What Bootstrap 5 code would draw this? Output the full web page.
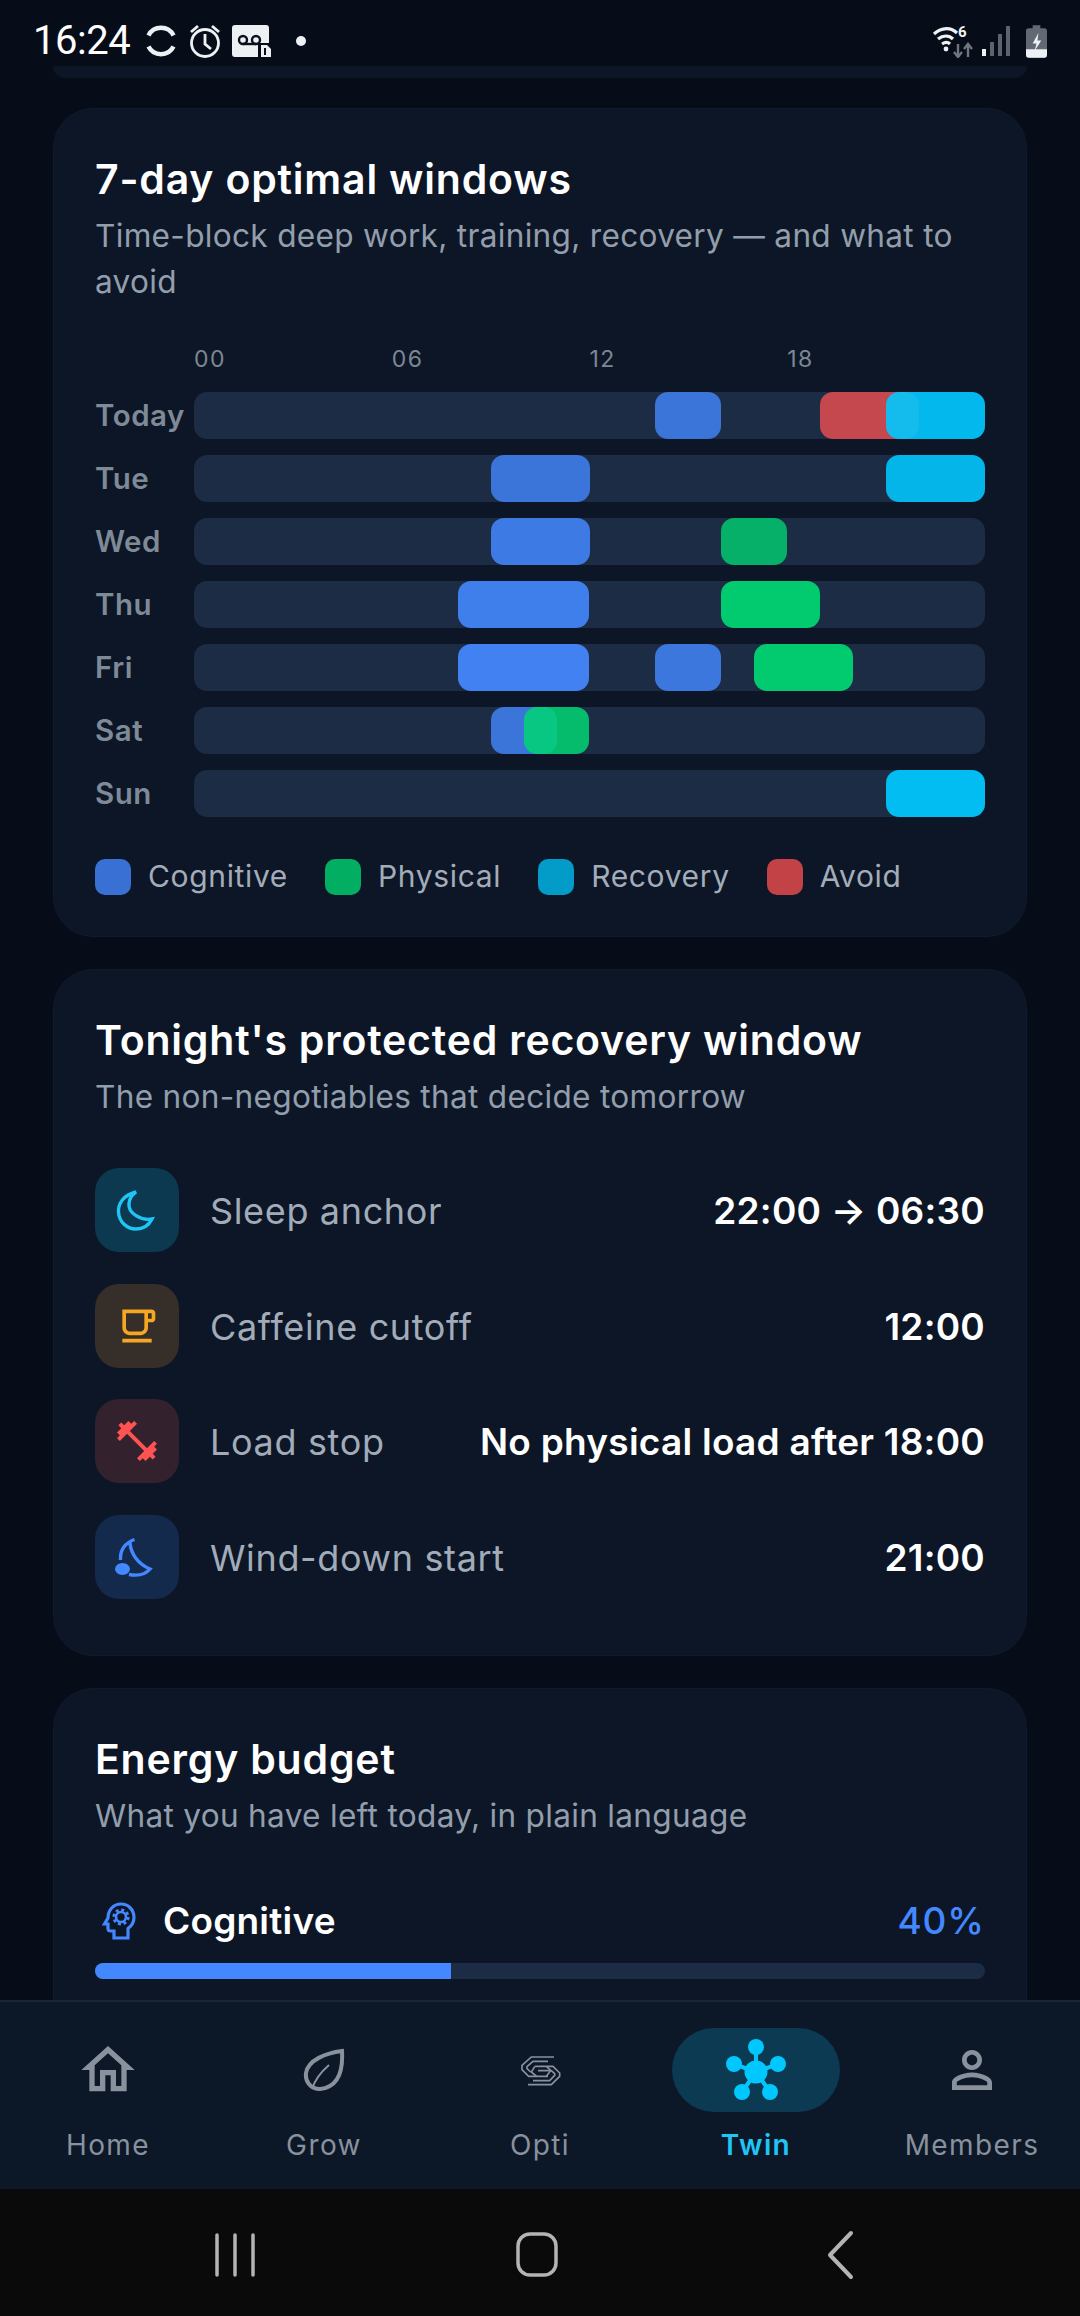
<!DOCTYPE html>
<html lang="en">
<head>
    <meta charset="UTF-8">
    <meta name="viewport" content="width=device-width, initial-scale=1.0">
    <title>Twin</title>
    <link href="https://cdn.jsdelivr.net/npm/bootstrap@5.3.0/dist/css/bootstrap.min.css" rel="stylesheet">
    <style>
        html, body { height: 100%; }
        body {
            background-color: #060d18;
            font-family: "Inter", "Liberation Sans", sans-serif;
            color: #fff;
            overflow: hidden;
        }
        .app-shell { height: 2316px; }
        .status-strip { height: 66px; padding: 0 33px 0 33px; font-family: "Roboto", sans-serif; font-size: 40px; }
        .status-strip svg { display: block; }
        .status-time { letter-spacing: -.5px; margin-right: 14px; line-height: 1; }
        .status-gap { margin-right: 9px; }
        .status-dot { margin-left: 24px; }
        .scroll-area { min-height: 0; overflow: hidden; padding: 0 53px; }
        .card-tail { height: 12px; background: #0c1626; border-radius: 0 0 30px 30px; margin-bottom: 30px; }
        .twin-card {
            background: #0c1626;
            border: 1px solid #0f1b2e;
            border-radius: 40px;
            padding: 42px 41px 0;
            margin-bottom: 32px;
            color: #fff;
        }
        .card-heading { font-size: 41px; font-weight: 600; line-height: 56px; margin: 0 0 6px; letter-spacing: .8px; }
        .card-sub { font-size: 31.6px; line-height: 46px; color: #939eac; margin: 0; letter-spacing: .3px; }
        .week-card { height: 829px; }
        .hour-axis { margin: 37px 0 0 99px; height: 34px; font-size: 23px; color: #7d8794; letter-spacing: 1.4px; line-height: 34px; }
        .hour-axis span { width: 197.75px; }
        .day-row { height: 47px; margin-top: 16px; }
        .hour-axis + .day-row { margin-top: 16px; }
        .day-name { width: 99px; font-size: 29.5px; font-weight: 600; color: #7f8a97; letter-spacing: .5px; white-space: nowrap; }
        .day-track { flex: 1; height: 47px; background: #1b2c44; border-radius: 13px; position: relative; }
        .day-block { position: absolute; top: 0; bottom: 0; border-radius: 13px; }
        .c-blue { background: #4488ff; }
        .c-green { background: #00d672; }
        .c-cyan { background: #00c8ff; }
        .c-red { background: #ff5252; }
        .legend-row { margin-top: 37px; font-size: 30px; color: #a3adba; letter-spacing: .65px; }
        .legend-dot { width: 36px; height: 36px; border-radius: 10px; margin-right: 17px; }
        .legend-row > div { margin-right: 37px; }
        .recovery-card { height: 687px; }
        .recovery-row { height: 84px; margin-bottom: 31.5px; }
        .recovery-list { margin-top: 48px; }
        .recovery-icon { width: 84px; height: 84px; border-radius: 24px; margin-right: 31px; flex-shrink: 0; }
        .recovery-name { font-size: 36px; color: #a2acb9; letter-spacing: .65px; white-space: nowrap; padding-top: 2px; }
        .recovery-value { font-size: 37px; font-weight: 600; white-space: nowrap; letter-spacing: .25px; padding-top: 2px; }
        .tone-cyan { background: #0c3850; color: #1fc5f5; }
        .tone-amber { background: #362e28; color: #f5a623; }
        .tone-red { background: #33222d; color: #ff5252; }
        .tone-blue { background: #132a4d; color: #4488ff; }
        .budget-card { height: 400px; }
        .budget-head { margin-top: 57px; height: 50px; }
        .budget-icon { margin-left: 5px; margin-right: 23px; }
        .budget-name { font-size: 37px; font-weight: 600; letter-spacing: .2px; }
        .budget-value { font-size: 37px; font-weight: 500; color: #4488ff; letter-spacing: .9px; }
        .budget-track { height: 16px; border-radius: 8px; background: #1b2c44; margin-top: 17px; }
        .budget-track .progress-bar { background: #4488ff; }
        .bottom-tabs { height: 189px; background: #0c1728; border-top: 2px solid #1a2638; flex-shrink: 0; }
        .tab-item { width: 216px; padding-top: 26px; }
        .tab-pill { width: 168px; height: 84px; border-radius: 42px; margin-bottom: 16px; color: #88919c; }
        .tab-pill.is-on { background: #0b3a52; color: #00c8ff; }
        .tab-text { font-size: 28px; color: #88919c; letter-spacing: 1.4px; line-height: 34px; }
        .tab-text.is-on { color: #1fc5f5; font-weight: 600; }
        .system-bar { height: 127px; background: #0a0a0a; flex-shrink: 0; }
    </style>
</head>
<body>
<div class="app-shell d-flex flex-column">
    <!-- status bar -->
    <div class="status-strip d-flex align-items-center justify-content-between flex-shrink-0 pt-3">
        <div class="d-flex align-items-center">
            <span class="status-time">16:24</span>
            <svg width="34" height="34" viewBox="0 0 34 34" fill="none" stroke="#eef1f4" stroke-width="4.5" class="status-gap"><path d="M4.500 11.500a14 14 0 0 1 25 0M4.500 22.500a14 14 0 0 0 25 0"/></svg>
            <svg width="36" height="36" viewBox="0 0 36 36" fill="none" stroke="#eef1f4" stroke-width="2.8" class="status-gap"><circle cx="18" cy="20" r="13.500"/><path d="M18 11v10l6 5M4 9l7-6M32 9l-7-6"/></svg>
            <svg width="40" height="32" viewBox="0 0 40 32"><path fill="#eef1f4" d="M3 0h31a3 3 0 0 1 3 3v15h-11v14H3a3 3 0 0 1-3-3V3a3 3 0 0 1 3-3z"/><path fill="#eef1f4" d="M29 20h6l4 4v8H29z"/><circle cx="11" cy="15" r="4" fill="none" stroke="#0a111c" stroke-width="2.400"/><circle cx="24" cy="15" r="4" fill="none" stroke="#0a111c" stroke-width="2.400"/><path d="M11 19h13" stroke="#0a111c" stroke-width="2.400"/><path d="M33 23v7" stroke="#0a111c" stroke-width="2"/></svg>
            <svg width="10" height="10" viewBox="0 0 10 10" class="status-dot"><circle cx="5" cy="5" r="5" fill="#eef1f4"/></svg>
        </div>
        <div class="d-flex align-items-center">
            <svg width="42" height="34" viewBox="0 0 42 34" fill="none" class="me-2"><path d="M2 10c8-7 17-7 23-1M6 15c5-4 11-4 15 0M10 20c3-2 6-2 8 0" stroke="#eef1f4" stroke-width="3.200"/><circle cx="14" cy="25" r="2.400" fill="#eef1f4"/><path d="M26 20v13M36 33V20" stroke="#6e7680" stroke-width="2.400"/><path d="M22 28l4 5 4-5M32 25l4-5 4 5" stroke="#6e7680" stroke-width="2.400"/><text x="26" y="13" fill="#eef1f4" font-size="15" font-weight="700" font-family="Roboto, sans-serif">6</text></svg>
            <svg width="28" height="32" viewBox="0 0 28 32" class="me-3"><rect x="0" y="24" width="4" height="7" fill="#eef1f4"/><rect x="8" y="17" width="4" height="14" fill="#5b636d"/><rect x="16" y="9" width="4" height="22" fill="#5b636d"/><rect x="24" y="1" width="4" height="30" fill="#5b636d"/></svg>
            <svg width="21" height="33" viewBox="0 0 22 34"><path fill="#616a74" d="M7 0h8v3h4a3 3 0 0 1 3 3v25a3 3 0 0 1-3 3H3a3 3 0 0 1-3-3V6a3 3 0 0 1 3-3h4z"/><path fill="#eef1f4" d="M0 25h22v6a3 3 0 0 1-3 3H3a3 3 0 0 1-3-3z"/><path fill="#eef1f4" d="M13 8l-6 11h4l-2 8 7-11h-4z"/></svg>
        </div>
    </div>

    <div class="scroll-area flex-grow-1">
        <div class="card-tail"></div>

        <!-- optimal windows -->
        <div class="card twin-card week-card">
            <h2 class="card-heading">7-day optimal windows</h2>
            <p class="card-sub">Time-block deep work, training, recovery — and what to avoid</p>
            <div class="hour-axis d-flex"><span>00</span><span>06</span><span>12</span><span>18</span></div>
            <div id="weekRows"></div>
            <div class="legend-row d-flex align-items-center">
                <div class="d-flex align-items-center"><span class="legend-dot c-blue" style="opacity:.8"></span>Cognitive</div>
                <div class="d-flex align-items-center"><span class="legend-dot c-green" style="opacity:.8"></span>Physical</div>
                <div class="d-flex align-items-center"><span class="legend-dot c-cyan" style="opacity:.75"></span>Recovery</div>
                <div class="d-flex align-items-center"><span class="legend-dot c-red" style="opacity:.75"></span>Avoid</div>
            </div>
        </div>

        <!-- recovery window -->
        <div class="card twin-card recovery-card">
            <h2 class="card-heading">Tonight's protected recovery window</h2>
            <p class="card-sub">The non-negotiables that decide tomorrow</p>
            <div class="recovery-list">
                <div class="recovery-row d-flex align-items-center">
                    <div class="recovery-icon tone-cyan d-flex align-items-center justify-content-center">
                        <svg width="44" height="44" viewBox="0 0 44 44" fill="none" stroke="currentColor" stroke-width="3.4"><path d="M21 4C9 7 3 15 3.500 24 4 34 12 41 21 41 28 41 34 37 37 31 26 33 13 25 14 16 14 11 17 7 21 4z"/></svg>
                    </div>
                    <span class="recovery-name">Sleep anchor</span>
                    <span class="recovery-value ms-auto">22:00 → 06:30</span>
                </div>
                <div class="recovery-row d-flex align-items-center">
                    <div class="recovery-icon tone-amber d-flex align-items-center justify-content-center">
                        <svg width="44" height="44" viewBox="0 0 24 24" fill="currentColor"><path d="M20 3H4v10c0 2.210 1.790 4 4 4h6c2.210 0 4-1.790 4-4v-3h2c1.110 0 2-.89 2-2V5c0-1.110-.89-2-2-2zm-4 10c0 1.100-.9 2-2 2H8c-1.100 0-2-.9-2-2V5h10v8zm4-5h-2V5h2v3zM4 19h16v2H4z"/></svg>
                    </div>
                    <span class="recovery-name">Caffeine cutoff</span>
                    <span class="recovery-value ms-auto">12:00</span>
                </div>
                <div class="recovery-row d-flex align-items-center">
                    <div class="recovery-icon tone-red d-flex align-items-center justify-content-center">
                        <svg width="48" height="48" viewBox="0 0 24 24" fill="currentColor"><path d="M20.570 14.860L22 13.430 20.570 12 17 15.570 8.430 7 12 3.430 10.570 2 9.140 3.430 7.710 2 5.570 4.140 4.140 2.710 2.710 4.140l1.430 1.430L2 7.710l1.430 1.430L2 10.570 3.430 12 7 8.430 15.570 17 12 20.570 13.430 22l1.430-1.430L16.290 22l2.140-2.140 1.430 1.430 1.430-1.430-1.430-1.430L22 16.290z"/></svg>
                    </div>
                    <span class="recovery-name">Load stop</span>
                    <span class="recovery-value ms-auto">No physical load after 18:00</span>
                </div>
                <div class="recovery-row d-flex align-items-center">
                    <div class="recovery-icon tone-blue d-flex align-items-center justify-content-center">
                        <svg width="44" height="44" viewBox="10 9 44 44" fill="none" stroke="currentColor" stroke-width="3.4"><path d="M29.500 13.500C20 17 15 24 15.500 34M25 17C26 28 33 38 45 43 40 49 32 50 24 48.500"/><ellipse cx="17.500" cy="43" rx="7.500" ry="6" fill="currentColor" stroke="none"/></svg>
                    </div>
                    <span class="recovery-name">Wind-down start</span>
                    <span class="recovery-value ms-auto">21:00</span>
                </div>
            </div>
        </div>

        <!-- energy budget -->
        <div class="card twin-card budget-card">
            <h2 class="card-heading">Energy budget</h2>
            <p class="card-sub">What you have left today, in plain language</p>
            <div class="budget-head d-flex align-items-center">
                <svg width="40" height="40" viewBox="0 0 40 40" fill="none" stroke="#4488ff" stroke-width="3.2" class="budget-icon"><path d="M14 37V30H10.500a2.500 2.500 0 0 1-2.500-2.500V23H4.500L8 17C8 9 13.500 3 21 3c7 0 13 5.500 13 13.500 0 5-2.500 8.500-6 11V37z"/><circle cx="21" cy="16" r="5" stroke-width="2.600"/><circle cx="21" cy="16" r="7.200" stroke-width="2.800" stroke-dasharray="3 2.660"/></svg>
                <span class="budget-name">Cognitive</span>
                <span class="budget-value ms-auto">40%</span>
            </div>
            <div class="progress budget-track"><div class="progress-bar" style="width:40%"></div></div>
        </div>
    </div>

    <!-- bottom nav -->
    <nav class="bottom-tabs d-flex">
        <div class="tab-item d-flex flex-column align-items-center">
            <div class="tab-pill d-flex align-items-center justify-content-center">
                <svg width="64" height="64" viewBox="0 0 24 24" fill="currentColor"><path d="M12 5.690l5 4.500V18h-2v-6H9v6H7v-7.810l5-4.500M12 3L2 12h3v8h6v-6h2v6h6v-8h3L12 3z"/></svg>
            </div>
            <span class="tab-text">Home</span>
        </div>
        <div class="tab-item d-flex flex-column align-items-center">
            <div class="tab-pill d-flex align-items-center justify-content-center">
                <svg width="44" height="44" viewBox="0 0 44 44" fill="none" stroke="currentColor" stroke-width="4"><path d="M40 3C41 20 38 39 18 41 8 41 3 33 4 25 6 12 24 5 40 3z"/><path d="M27 17C19 24 13 31 10 41" stroke-width="2"/></svg>
            </div>
            <span class="tab-text">Grow</span>
        </div>
        <div class="tab-item d-flex flex-column align-items-center">
            <div class="tab-pill d-flex align-items-center justify-content-center">
                <svg width="45" height="35" viewBox="40 35 135 105" fill="none" stroke="currentColor" stroke-width="5"><path d="M148 47H80L52 72V85L72 105H130"/><path d="M130 60H85L67 76V82L78 92"/><path d="M70 130H140L165 105V95L145 75H90"/><path d="M85 118H135L150 102V97L140 88H100"/><path d="M90 76 80 92 96 105M126 75 138 88 125 105"/></svg>
            </div>
            <span class="tab-text">Opti</span>
        </div>
        <div class="tab-item d-flex flex-column align-items-center">
            <div class="tab-pill is-on d-flex align-items-center justify-content-center">
                <svg width="64" height="64" viewBox="0 0 64 64" fill="currentColor"><path d="M32 12V36M10 26 32 34M54 26 32 34M18 54 32 34M46 54 32 34" stroke="currentColor" stroke-width="4"/><circle cx="32" cy="34" r="11.500"/><circle cx="32" cy="9" r="8"/><circle cx="10" cy="26" r="8"/><circle cx="54" cy="26" r="8"/><circle cx="18" cy="54" r="8"/><circle cx="46" cy="54" r="8"/></svg>
            </div>
            <span class="tab-text is-on">Twin</span>
        </div>
        <div class="tab-item d-flex flex-column align-items-center">
            <div class="tab-pill d-flex align-items-center justify-content-center">
                <svg width="60" height="60" viewBox="0 0 24 24" fill="currentColor"><path d="M12 5.900c1.160 0 2.100.94 2.100 2.100s-.94 2.100-2.100 2.100S9.900 9.160 9.900 8s.94-2.100 2.100-2.100m0 9c2.970 0 6.100 1.460 6.100 2.100v1.100H5.900V17c0-.64 3.130-2.100 6.100-2.100M12 4C9.790 4 8 5.790 8 8s1.790 4 4 4 4-1.790 4-4-1.790-4-4-4zm0 9c-2.670 0-8 1.340-8 4v3h16v-3c0-2.660-5.330-4-8-4z"/></svg>
            </div>
            <span class="tab-text">Members</span>
        </div>
    </nav>

    <!-- android nav -->
    <div class="system-bar position-relative">
        <svg width="1080" height="127" viewBox="0 0 1080 127" fill="none" stroke="#b4b4b4" stroke-width="3.5" stroke-linecap="round" stroke-linejoin="round">
            <path d="M217 46V86M235 46V86M253 46V86"/>
            <rect x="518" y="45" width="38" height="41" rx="12"/>
            <path d="M851 44 830 66 851 88" stroke-width="4"/>
        </svg>
    </div>
</div>

<script>
    // blocks are [colour, start hour, end hour, opacity]
    const days = [
        ['Today', [['c-blue', 14, 16, .8], ['c-red', 19, 22, .75], ['c-cyan', 21, 24, .9]]],
        ['Tue', [['c-blue', 9, 12, .8], ['c-cyan', 21, 24, .88]]],
        ['Wed', [['c-blue', 9, 12, .85], ['c-green', 16, 18, .78]]],
        ['Thu', [['c-blue', 8, 12, .9], ['c-green', 16, 19, .93]]],
        ['Fri', [['c-blue', 8, 12, .93], ['c-blue', 14, 16, .82], ['c-green', 17, 20, .93]]],
        ['Sat', [['c-blue', 9, 11, .8], ['c-green', 10, 12, .85]]],
        ['Sun', [['c-cyan', 21, 24, .93]]]
    ];

    const weekRows = document.getElementById('weekRows');
    days.forEach(([name, blocks]) => {
        const row = document.createElement('div');
        row.className = 'day-row d-flex align-items-center';
        const bars = blocks.map(([colour, from, to, alpha]) =>
            `<div class="day-block ${colour}" style="left:${from / 24 * 100}%;width:${(to - from) / 24 * 100}%;opacity:${alpha}"></div>`
        ).join('');
        row.innerHTML = `<span class="day-name">${name}</span><div class="day-track">${bars}</div>`;
        weekRows.appendChild(row);
    });
</script>
<script src="https://cdn.jsdelivr.net/npm/bootstrap@5.3.0/dist/js/bootstrap.bundle.min.js"></script>
</body>
</html>
